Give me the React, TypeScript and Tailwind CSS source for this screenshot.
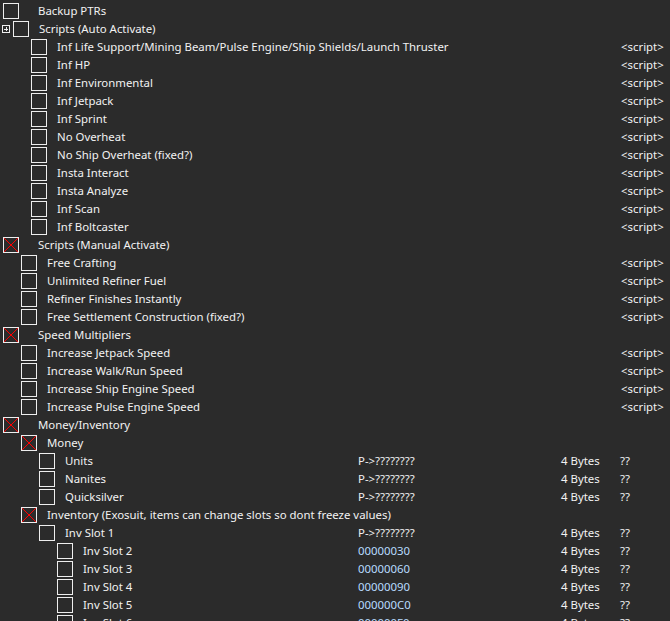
import React from "react";

type Row = {
  name: string;
  x: number; // checkbox left edge
  checked?: boolean;
  expander?: boolean;
  addr?: string;
  blue?: boolean;
  type?: string;
  value?: string;
};

const padClass: Record<number, string> = {
  3: "pl-[3px]",
  13: "pl-[2px]",
  21: "pl-[21px]",
  31: "pl-[31px]",
  39: "pl-[39px]",
  57: "pl-[57px]",
};

const S = "<script>";

const rows: Row[] = [
  { name: "Backup PTRs", x: 3 },
  { name: "Scripts (Auto Activate)", x: 13, expander: true },
  { name: "Inf Life Support/Mining Beam/Pulse Engine/Ship Shields/Launch Thruster", x: 31, value: S },
  { name: "Inf HP", x: 31, value: S },
  { name: "Inf Environmental", x: 31, value: S },
  { name: "Inf Jetpack", x: 31, value: S },
  { name: "Inf Sprint", x: 31, value: S },
  { name: "No Overheat", x: 31, value: S },
  { name: "No Ship Overheat (fixed?)", x: 31, value: S },
  { name: "Insta Interact", x: 31, value: S },
  { name: "Insta Analyze", x: 31, value: S },
  { name: "Inf Scan", x: 31, value: S },
  { name: "Inf Boltcaster", x: 31, value: S },
  { name: "Scripts (Manual Activate)", x: 3, checked: true },
  { name: "Free Crafting", x: 21, value: S },
  { name: "Unlimited Refiner Fuel", x: 21, value: S },
  { name: "Refiner Finishes Instantly", x: 21, value: S },
  { name: "Free Settlement Construction (fixed?)", x: 21, value: S },
  { name: "Speed Multipliers", x: 3, checked: true },
  { name: "Increase Jetpack Speed", x: 21, value: S },
  { name: "Increase Walk/Run Speed", x: 21, value: S },
  { name: "Increase Ship Engine Speed", x: 21, value: S },
  { name: "Increase Pulse Engine Speed", x: 21, value: S },
  { name: "Money/Inventory", x: 3, checked: true },
  { name: "Money", x: 21, checked: true },
  { name: "Units", x: 39, addr: "P->????????", type: "4 Bytes", value: "??" },
  { name: "Nanites", x: 39, addr: "P->????????", type: "4 Bytes", value: "??" },
  { name: "Quicksilver", x: 39, addr: "P->????????", type: "4 Bytes", value: "??" },
  { name: "Inventory (Exosuit, items can change slots so dont freeze values)", x: 21, checked: true },
  { name: "Inv Slot 1", x: 39, addr: "P->????????", type: "4 Bytes", value: "??" },
  { name: "Inv Slot 2", x: 57, addr: "00000030", blue: true, type: "4 Bytes", value: "??" },
  { name: "Inv Slot 3", x: 57, addr: "00000060", blue: true, type: "4 Bytes", value: "??" },
  { name: "Inv Slot 4", x: 57, addr: "00000090", blue: true, type: "4 Bytes", value: "??" },
  { name: "Inv Slot 5", x: 57, addr: "000000C0", blue: true, type: "4 Bytes", value: "??" },
  { name: "Inv Slot 6", x: 57, addr: "000000F0", blue: true, type: "4 Bytes", value: "??" },
];

function Box({ checked }: { checked?: boolean }) {
  return (
    <div className="w-[16px] h-[16px] shrink-0 border border-[#eeeeee] box-border relative">
      {checked && (
        <svg className="absolute inset-0" width="14" height="14" viewBox="0 0 14 14">
          <line x1="0" y1="0" x2="14" y2="14" stroke="#ff0000" strokeWidth="1" />
          <line x1="14" y1="0" x2="0" y2="14" stroke="#ff0000" strokeWidth="1" />
        </svg>
      )}
    </div>
  );
}

function Expander() {
  return (
    <div className="w-[8px] h-[8px] border border-[#eeeeee] box-border relative mr-[3px] shrink-0">
      <div className="absolute left-[1px] top-[2.5px] w-[4px] h-[1px] bg-[#eeeeee]" />
      <div className="absolute left-[2.5px] top-[1px] w-[1px] h-[4px] bg-[#eeeeee]" />
    </div>
  );
}

export default function App() {
  return (
    <div
      className="w-[670px] h-[621px] overflow-hidden bg-[#2b2b2b] text-[#f2f2f2] text-[11.4px] pt-[2px]"
      style={{ fontFamily: '"Noto Sans", "Open Sans", sans-serif' }}
    >
      {rows.map((r, i) => (
        <div key={i} className="flex items-center h-[18px] whitespace-nowrap leading-[18px]">
          <div className={`flex items-center w-[358px] shrink-0 ${padClass[r.x]}`}>
            {r.expander && <Expander />}
            <Box checked={r.checked} />
            <span className={r.x === 3 ? "ml-[19px]" : "ml-[10px]"}>{r.name}</span>
          </div>
          <div className={`w-[203px] shrink-0 ${r.blue ? "text-[#b8dcff]" : ""}`}>{r.addr}</div>
          <div className="w-[59px] shrink-0">{r.type}</div>
          <div className={r.value === S ? "pl-[1px]" : ""}>{r.value}</div>
        </div>
      ))}
    </div>
  );
}
